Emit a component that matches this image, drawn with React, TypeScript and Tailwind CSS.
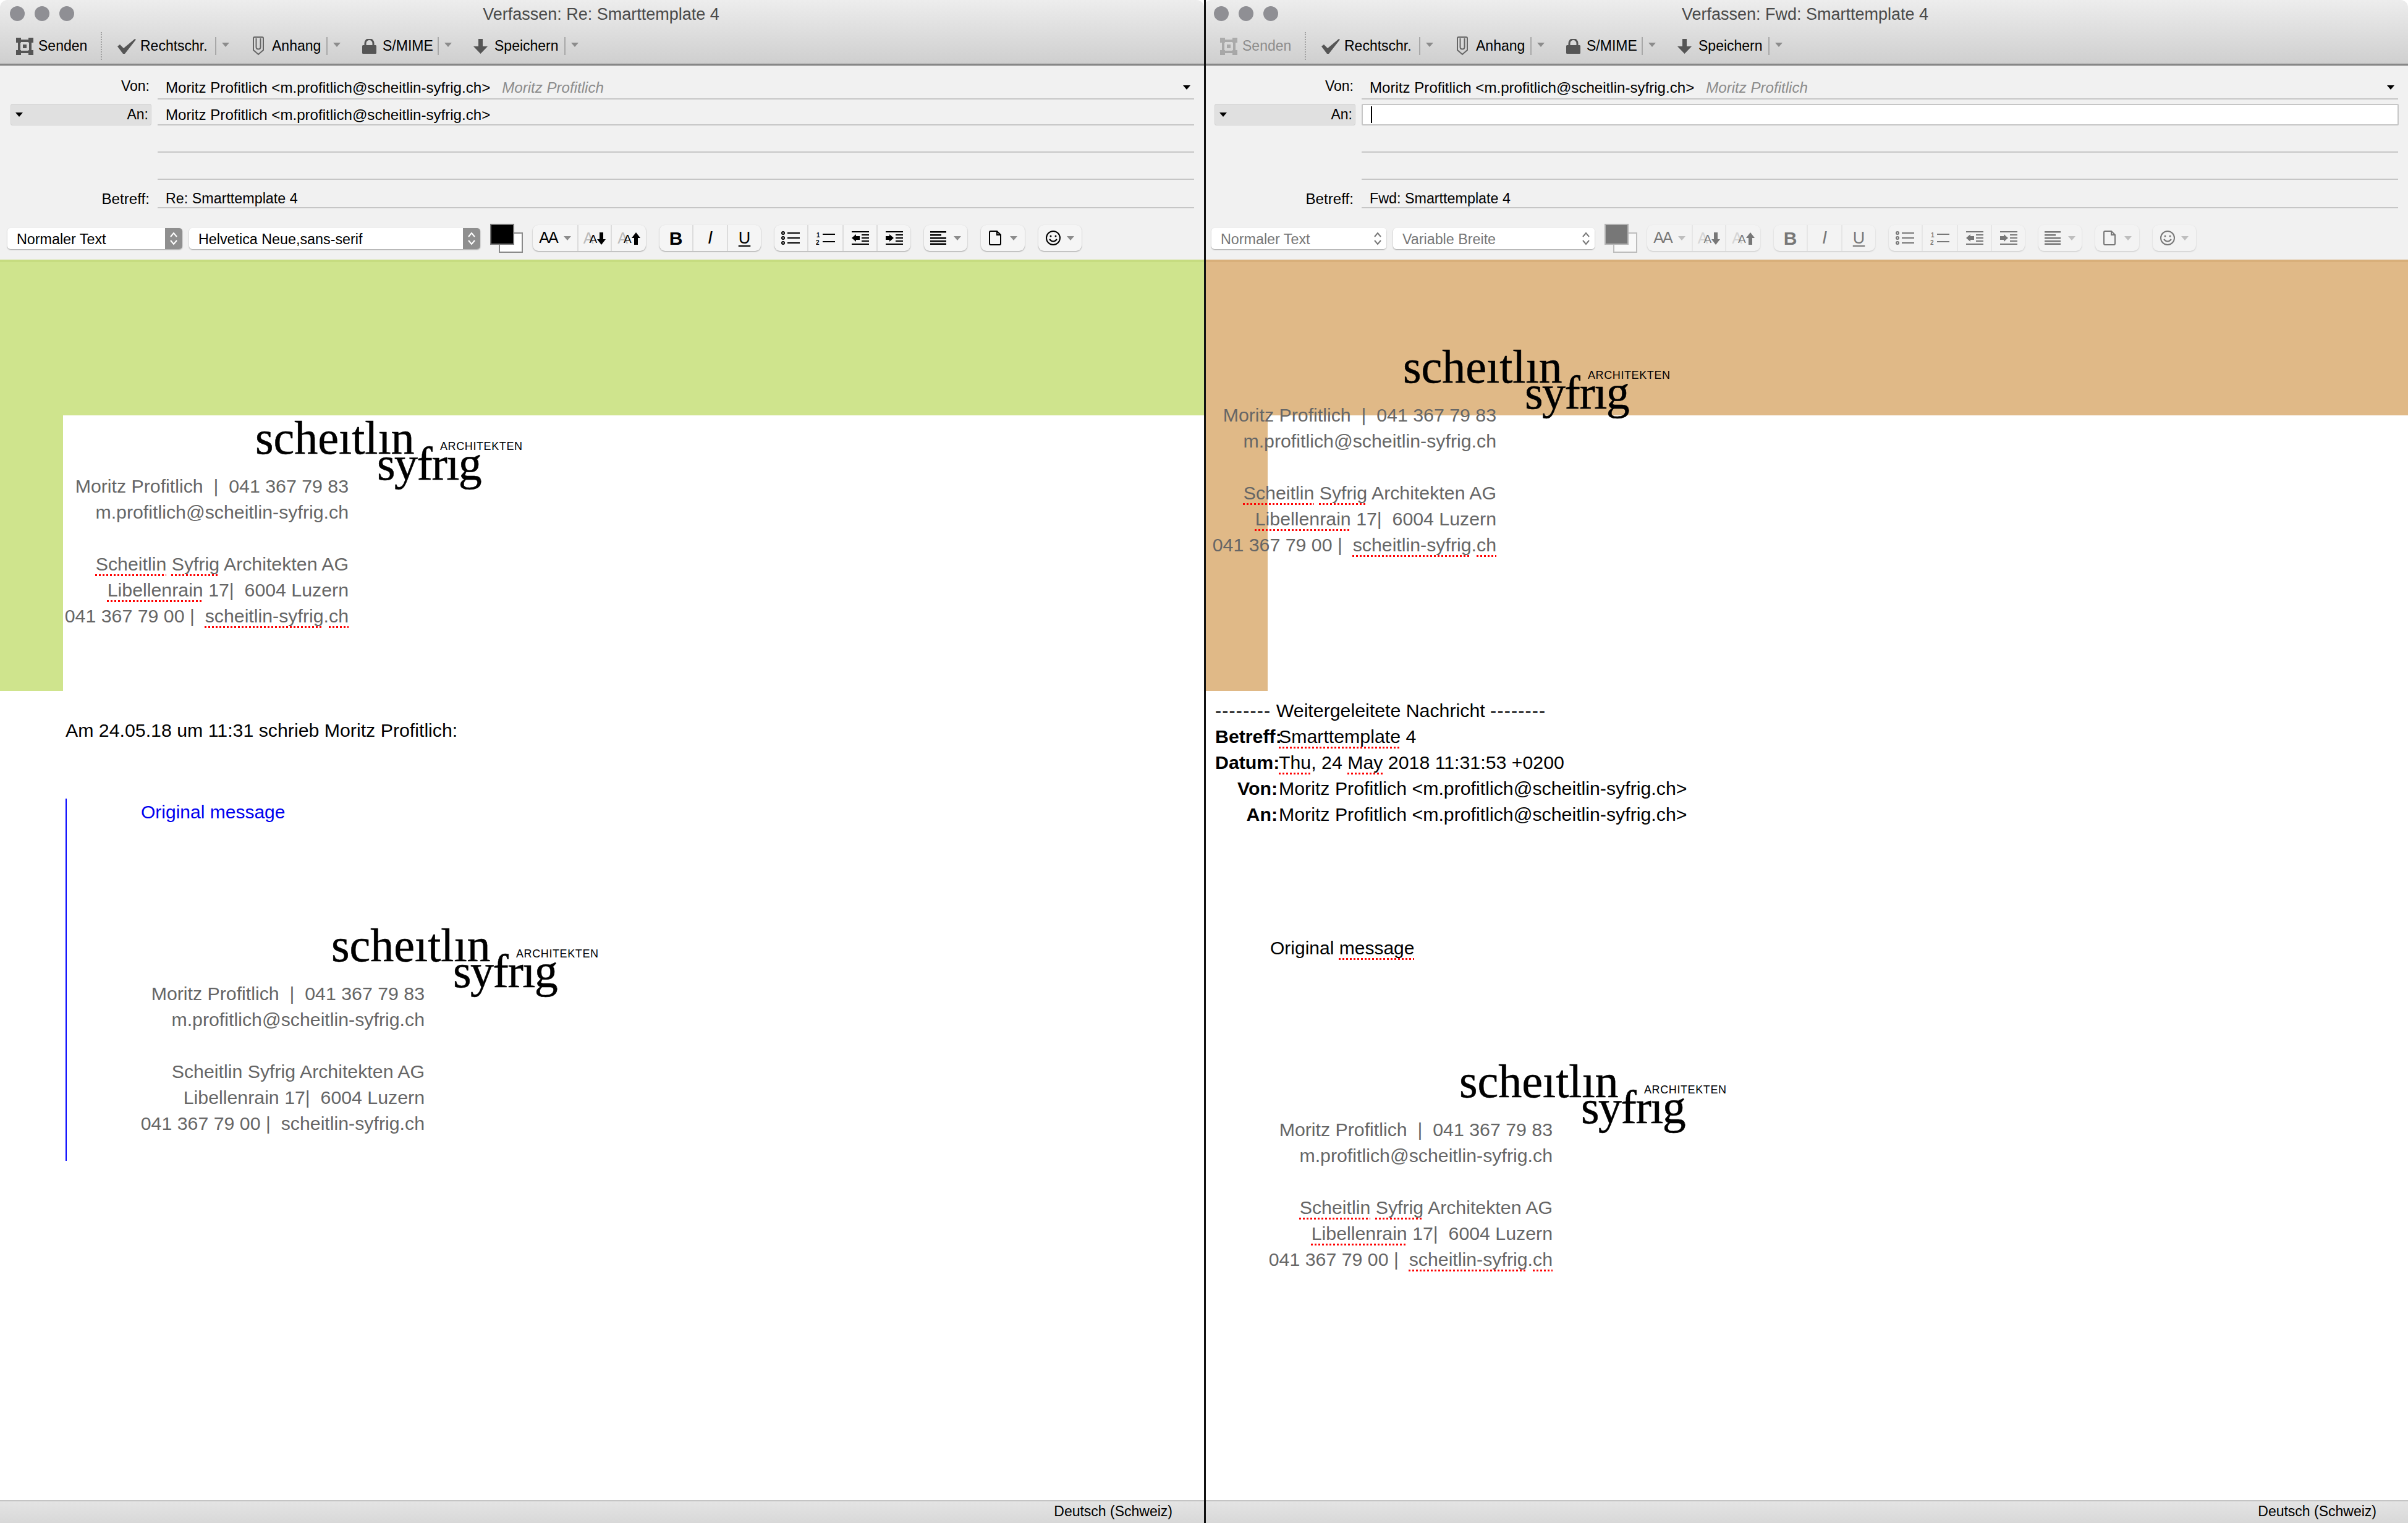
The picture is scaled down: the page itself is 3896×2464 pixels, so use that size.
import React from 'react';

const SANS = 'font-["Liberation_Sans",Arial,sans-serif]';
const SPELL =
  'underline decoration-dotted decoration-[#f00] decoration-[3px] underline-offset-[6px] [text-decoration-skip-ink:none]';

const Tri: React.FC<{ className?: string; fill?: string }> = ({ className = '', fill = '#8c8c8c' }) => (
  <svg viewBox="0 0 12 7" className={`w-[12px] h-[7px] shrink-0 ${className}`}>
    <polygon points="0,0 12,0 6,7" fill={fill} />
  </svg>
);

// toolbar icons
const SendIcon = () => (
  <svg viewBox="0 0 28 28" className="w-[28px] h-[28px]" fill="#555">
    <rect x="0" y="0" width="8" height="8" />
    <rect x="20" y="0" width="8" height="8" />
    <rect x="0" y="20" width="8" height="8" />
    <rect x="20" y="20" width="8" height="8" />
    <rect x="8" y="3" width="12" height="4" />
    <rect x="8" y="21" width="12" height="4" />
    <rect x="3" y="8" width="4" height="12" />
    <rect x="21" y="8" width="4" height="12" />
    <rect x="11" y="11" width="6" height="6" />
  </svg>
);
const CheckIcon = () => (
  <svg viewBox="0 0 30 24" className="w-[30px] h-[24px]" fill="#555">
    <polygon points="0,12 4,9 10,15 28,0 30,1 12,24 9,24" />
  </svg>
);
const ClipIcon = () => (
  <svg viewBox="0 0 18 31" className="w-[18px] h-[31px]" fill="none" stroke="#666" strokeWidth="2">
    <path d="M1 3 q0 -2 2 -2 h12 q2 0 2 2 v19 l-8 7 l-8 -7 z" />
    <path d="M5.500 3 v14 q0 3.500 3.500 3.500 t3.500 -3.500 v-14" />
  </svg>
);
const LockIcon = () => (
  <svg viewBox="0 0 23 24" className="w-[23px] h-[24px]">
    <path d="M5 11 v-4 a6.500 6.500 0 0 1 13 0 v4" fill="none" stroke="#555" strokeWidth="3" />
    <rect x="0" y="10" width="23" height="14" rx="1.500" fill="#555" />
  </svg>
);
const SaveIcon = () => (
  <svg viewBox="0 0 23 24" className="w-[23px] h-[24px]" fill="#555">
    <polygon points="8,0 15,0 15,12 23,12 11.500,24 0,12 8,12" />
  </svg>
);

const ToolBtn: React.FC<{
  icon: React.ReactNode;
  label: string;
  labelW: string;
  iconW: string;
  gap: string;
  ml: string;
}> = ({ icon, label, labelW, iconW, gap, ml }) => (
  <div className={`flex items-center ${ml}`}>
    <div className={`flex justify-center ${iconW}`}>{icon}</div>
    <span className={`${gap} ${labelW} whitespace-nowrap text-[23px] text-black`}>{label}</span>
    <div className="ml-[10px] w-[2px] h-[29px] bg-[#a8a8a8]" />
    <Tri className="ml-[9px] -mt-[4px]" />
  </div>
);

const Select: React.FC<{ label: string; width: string; disabled?: boolean }> = ({ label, width, disabled }) => (
  <div
    className={`flex items-stretch h-[34px] mt-[2px] rounded-[5px] bg-white shadow-[0_1px_2px_rgba(0,0,0,0.35)] overflow-hidden ${width}`}
  >
    <span
      className={`flex-1 pl-[15px] text-[23.300px] leading-[36px] whitespace-nowrap ${disabled ? 'text-[#777]' : 'text-black'}`}
    >
      {label}
    </span>
    <div className={`w-[28px] flex items-center justify-center ${disabled ? 'bg-white' : 'bg-[#8f8f8f]'}`}>
      <svg viewBox="0 0 14 24" className="w-[14px] h-[24px]" fill="none" stroke={disabled ? '#777' : '#fff'} strokeWidth="2">
        <path d="M2 9 L7 3 L12 9" />
        <path d="M2 15 L7 21 L12 15" />
      </svg>
    </div>
  </div>
);

const Group: React.FC<{ children: React.ReactNode }> = ({ children }) => (
  <div className="flex h-[42px] rounded-[9px] bg-[#f5f5f5] shadow-[0_1px_2px_rgba(0,0,0,0.35)] overflow-hidden">
    {children}
  </div>
);
const Cell: React.FC<{ w: string; last?: boolean; children: React.ReactNode }> = ({ w, last, children }) => (
  <div className={`flex items-center justify-center text-black ${w} ${last ? '' : 'border-r-2 border-[#dcdcdc]'}`}>
    {children}
  </div>
);

const MiniA: React.FC<{ up?: boolean }> = ({ up }) => (
  <div className="flex items-end">
    <span className="text-[25px] leading-[28px] text-[#bbb]">A</span>
    <span className="-ml-[7px] text-[19px] leading-[25px]">A</span>
    <svg viewBox="0 0 14 20" className="w-[14px] h-[20px] mb-[3px]" fill="currentColor">
      {up ? <polygon points="7,0 14,9 10,9 10,20 4,20 4,9 0,9" /> : <polygon points="4,0 10,0 10,11 14,11 7,20 0,11 4,11" />}
    </svg>
  </div>
);

const BulletsIcon = () => (
  <svg viewBox="0 0 32 24" className="w-[32px] h-[24px]" fill="none" stroke="currentColor" strokeWidth="2">
    <circle cx="3" cy="4" r="2" />
    <circle cx="3" cy="12" r="2" />
    <circle cx="3" cy="20" r="2" />
    <path d="M10 4 H30 M10 12 H30 M10 20 H30" />
  </svg>
);
const NumbersIcon = () => (
  <svg viewBox="0 0 32 24" className="w-[32px] h-[24px]" stroke="currentColor">
    <text x="1" y="11" fontSize="10" fontWeight="700" fill="currentColor" stroke="none">1</text>
    <text x="0" y="23" fontSize="10" fontWeight="700" fill="currentColor" stroke="none">2</text>
    <path d="M11 6 H31 M11 18 H31" strokeWidth="2" fill="none" />
  </svg>
);
const IndentIcon: React.FC<{ out?: boolean }> = ({ out }) => (
  <svg viewBox="0 0 28 22" className="w-[28px] h-[22px]" fill="currentColor">
    <rect x="0" y="0" width="28" height="2" />
    <rect x="0" y="20" width="28" height="2" />
    <rect x="16" y="5" width="12" height="2" />
    <rect x="16" y="10" width="12" height="2" />
    <rect x="16" y="15" width="12" height="2" />
    {out ? <polygon points="0,11 7,5 7,8 13,8 13,14 7,14 7,17" /> : <polygon points="13,11 6,5 6,8 0,8 0,14 6,14 6,17" />}
  </svg>
);
const AlignIcon = () => (
  <svg viewBox="0 0 26 22" className="w-[26px] h-[22px]" fill="currentColor">
    <rect x="0" y="0" width="26" height="2.500" />
    <rect x="0" y="5" width="18" height="2.500" />
    <rect x="0" y="10" width="26" height="2.500" />
    <rect x="0" y="15" width="26" height="2.500" />
    <rect x="0" y="19.500" width="26" height="2.500" />
  </svg>
);
const PageIcon = () => (
  <svg viewBox="0 0 20 24" className="w-[20px] h-[24px]" fill="none" stroke="currentColor" strokeWidth="2">
    <path d="M3 1 H13 L19 7 V21 q0 2 -2 2 H3 q-2 0 -2 -2 V3 q0 -2 2 -2 Z M13 1 V7 H19" />
  </svg>
);
const SmileIcon = () => (
  <svg viewBox="0 0 24 24" className="w-[24px] h-[24px]" fill="none" stroke="currentColor" strokeWidth="2">
    <circle cx="12" cy="12" r="11" />
    <circle cx="8" cy="9" r="1.500" fill="currentColor" stroke="none" />
    <circle cx="16" cy="9" r="1.500" fill="currentColor" stroke="none" />
    <path d="M6 14 q6 7 12 0" />
  </svg>
);

const FormatBar: React.FC<{ disabled?: boolean; fontLabel: string; fontW: string }> = ({ disabled, fontLabel, fontW }) => {
  const dim = disabled ? 'opacity-50' : '';
  return (
    <div className="flex items-center h-[70px] pl-[12px]">
      <Select label="Normaler Text" width="w-[283px]" disabled={disabled} />
      <Select label={fontLabel} width={`ml-[11px] ${fontW}`} disabled={disabled} />
      <div className={`relative ml-[16px] w-[53px] h-[47px] shrink-0 ${dim}`}>
        <div className="absolute left-[14px] top-[14px] w-[39px] h-[33px] bg-white border-2 border-[#8a8a8a]" />
        <div className="absolute left-0 top-0 w-[39px] h-[34px] bg-black border-2 border-[#777]" />
      </div>
      <div className={`flex gap-[22px] ml-[16px] ${SANS}`}>
        <div className={dim}>
          <Group>
            <Cell w="w-[74px]">
              <span className="text-[25px] tracking-[-2px]">AA</span>
              <Tri className="ml-[10px]" />
            </Cell>
            <Cell w="w-[54px]"><MiniA /></Cell>
            <Cell w="w-[55px]" last><MiniA up /></Cell>
          </Group>
        </div>
        <div className={dim}>
          <Group>
            <Cell w="w-[55px]"><span className="text-[30px] font-bold">B</span></Cell>
            <Cell w="w-[56px]"><span className="text-[29px] italic">I</span></Cell>
            <Cell w="w-[53px]" last>
              <span className="text-[27px] underline underline-offset-[3px]">U</span>
            </Cell>
          </Group>
        </div>
        <div className={dim}>
          <Group>
            <Cell w="w-[55px]"><BulletsIcon /></Cell>
            <Cell w="w-[57px]"><NumbersIcon /></Cell>
            <Cell w="w-[55px]"><IndentIcon out /></Cell>
            <Cell w="w-[53px]" last><IndentIcon /></Cell>
          </Group>
        </div>
        <div className={dim}>
          <Group>
            <Cell w="w-[70px]" last><AlignIcon /><Tri className="ml-[12px]" /></Cell>
          </Group>
        </div>
        <div className={dim}>
          <Group>
            <Cell w="w-[71px]" last><PageIcon /><Tri className="ml-[14px]" /></Cell>
          </Group>
        </div>
        <div className={dim}>
          <Group>
            <Cell w="w-[70px]" last><SmileIcon /><Tri className="ml-[10px]" /></Cell>
          </Group>
        </div>
      </div>
    </div>
  );
};

const Field: React.FC<{ className?: string; children?: React.ReactNode }> = ({ className = '', children }) => (
  <div className={`flex items-center w-[1677px] ml-[255px] border-b-2 border-[#c6c6c6] pl-[13px] text-[24.100px] whitespace-nowrap ${className}`}>
    {children}
  </div>
);

const Header: React.FC<{ title: string; subject: string; forwarded?: boolean }> = ({ title, subject, forwarded }) => (
  <>
    <div className="h-[103px] rounded-t-[12px] bg-gradient-to-b from-[#ededed] to-[#cfcfcf]">
      <div className="relative flex items-center justify-center h-[46px]">
        <span className="-ml-[3px] text-[27px] text-[#4a4a4a] whitespace-nowrap">{title}</span>
        <div className="absolute left-[16px] top-[10px] flex gap-[16px]">
          <div className="w-[24px] h-[24px] rounded-full bg-[#8f8f94]" />
          <div className="w-[24px] h-[24px] rounded-full bg-[#8f8f94]" />
          <div className="w-[24px] h-[24px] rounded-full bg-[#8f8f94]" />
        </div>
      </div>
      <div className="flex items-center h-[57px] pl-[26px]">
        <div className={`flex items-center ${forwarded ? 'opacity-35' : ''}`}>
          <SendIcon />
          <span className="ml-[8px] w-[77px] text-[23px] whitespace-nowrap text-black">Senden</span>
        </div>
        <div className="ml-[24px] h-[45px] border-l-2 border-dotted border-[#a0a0a0]" />
        <ToolBtn ml="ml-[25px]" iconW="w-[30px]" gap="ml-[7px]" labelW="w-[111px]" icon={<CheckIcon />} label="Rechtschr." />
        <ToolBtn ml="ml-[38px]" iconW="w-[18px]" gap="ml-[13px]" labelW="w-[78px]" icon={<ClipIcon />} label="Anhang" />
        <ToolBtn ml="ml-[35px]" iconW="w-[23px]" gap="ml-[10px]" labelW="w-[79px]" icon={<LockIcon />} label="S/MIME" />
        <ToolBtn ml="ml-[35px]" iconW="w-[23px]" gap="ml-[11px]" labelW="w-[103px]" icon={<SaveIcon />} label="Speichern" />
      </div>
    </div>
    <div className="h-[4px] bg-gradient-to-b from-[#6e6e6e] to-[#bdbdbd]" />
    <div className="relative bg-[#f1f1f1] h-[313px]">
      <div className="relative flex items-end h-[54px]">
        <span className="absolute right-[1706px] bottom-[4px] text-[23px] leading-[36px] text-black">Von:</span>
        <Field className="relative h-[36px]">
          <span>Moritz Profitlich &lt;m.profitlich@scheitlin-syfrig.ch&gt;</span>
          <span className="ml-[19px] italic text-[#8c8c8c]">Moritz Profitlich</span>
          <Tri className="absolute right-[6px] top-[13px]" fill="#000" />
        </Field>
      </div>
      <div className="relative h-[42px] pt-[7px]">
        <div className="absolute left-[17px] top-[7px] flex items-center justify-between w-[228px] h-[35px] pl-[7px] pr-[4px] rounded-[3px] bg-[#e0e0e0] border border-[#d2d2d2]">
          <Tri fill="#000" />
          <span className="text-[23px] text-black">An:</span>
        </div>
        {forwarded ? (
          <div className="flex items-center w-[1678px] ml-[255px] h-[35px] pl-[13px] bg-white border-2 border-[#c6c6c6] rounded-[2px]">
            <div className="w-[2px] h-[27px] bg-black" />
          </div>
        ) : (
          <Field className="h-[35px] pt-[4px]">Moritz Profitlich &lt;m.profitlich@scheitlin-syfrig.ch&gt;</Field>
        )}
      </div>
      <Field className="h-[44px]" />
      <Field className="h-[44px]" />
      <div className="relative h-[46px]">
        <span className="absolute right-[1706px] top-[13px] text-[24.200px] leading-[36px] text-black">Betreff:</span>
        <Field className="h-[46px] pt-[17px]">
          <span className="text-[23.300px]">{subject}</span>
        </Field>
      </div>
      <div className="absolute left-0 right-0 top-[243px]">
        <FormatBar
          disabled={forwarded}
          fontLabel={forwarded ? 'Variable Breite' : 'Helvetica Neue,sans-serif'}
          fontW={forwarded ? 'w-[326px]' : 'w-[471px]'}
        />
      </div>
    </div>
  </>
);

const Logo = () => (
  <div className="relative ml-[311px] h-[88px] w-[431px] text-left text-black font-['Liberation_Serif',serif] whitespace-nowrap">
    <span className="absolute left-0 -top-[20px] text-[76px] leading-[100px] [-webkit-text-stroke:0.5px_black]">scheıtlın</span>
    <span className="absolute left-[197px] top-[22px] text-[76px] leading-[100px] tracking-[-1.500px] [-webkit-text-stroke:0.5px_black]">syfrıg</span>
    <span className={`absolute left-[299px] top-[32px] text-[18px] leading-[24px] tracking-[0.600px] ${SANS}`}>ARCHITEKTEN</span>
  </div>
);

const Signature: React.FC<{ spell?: boolean; className?: string }> = ({ spell, className = '' }) => {
  const s = spell ? SPELL : '';
  return (
    <div className={`w-[462px] text-right text-[30.300px] leading-[42px] text-[#666] whitespace-nowrap ${className}`}>
      <Logo />
      <p>Moritz Profitlich &nbsp;|&nbsp; 041 367 79 83</p>
      <p>m.profitlich@scheitlin-syfrig.ch</p>
      <p>&nbsp;</p>
      <p><span className={s}>Scheitlin</span> <span className={s}>Syfrig</span> Architekten AG</p>
      <p><span className={s}>Libellenrain</span> 17|&nbsp; 6004 Luzern</p>
      <p>041 367 79 00 |&nbsp; <span className={s}>scheitlin-syfrig</span>.<span className={s}>ch</span></p>
    </div>
  );
};

const StatusBar = () => (
  <div className="flex items-center justify-end h-[37px] pb-[3px] pr-[51px] border-t-2 border-[#c4c4c4] bg-gradient-to-b from-[#e4e4e4] to-[#d8d8d8]">
    <span className="text-[23px] text-black whitespace-nowrap">Deutsch (Schweiz)</span>
  </div>
);

const ForwardRow: React.FC<{ label: string; children: React.ReactNode }> = ({ label, children }) => (
  <div className="flex">
    <b className="w-[101px] text-right">{label}</b>
    <span className="ml-[2px]">{children}</span>
  </div>
);

export default function App() {
  return (
    <div className={`flex w-[3896px] h-[2464px] overflow-hidden bg-white ${SANS}`}>
      {/* reply window */}
      <div className="flex flex-col w-[1948px]">
        <Header title="Verfassen: Re: Smarttemplate 4" subject="Re: Smarttemplate 4" />
        <div className="flex-1 overflow-hidden bg-white text-[30.300px] leading-[42px] text-black">
          <div className="pt-[248px] pl-[102px] bg-[#cfe48d] border-t-4 border-[#c6dc80]">
            <div className="h-[446px] pt-[6px] bg-white">
              <Signature spell />
            </div>
          </div>
          <p className="mt-[43px] ml-[106px]">Am 24.05.18 um 11:31 schrieb Moritz Profitlich:</p>
          <div className="mt-[89px] ml-[106px] pl-[120px] pb-[39px] border-l-2 border-[#0000ff]">
            <p className="pt-[1px] -mb-[1px] text-[30px] text-[#0000ee]">Original message</p>
            <Signature className="mt-[165px] -ml-[3px]" />
          </div>
        </div>
        <StatusBar />
      </div>

      {/* forward window */}
      <div className="relative flex flex-col w-[1948px]">
        <Header title="Verfassen: Fwd: Smarttemplate 4" subject="Fwd: Smarttemplate 4" forwarded />
        <div className="flex-1 overflow-hidden bg-white text-[30.300px] leading-[42px] text-black">
          <div className="pt-[248px] pl-[103px] bg-[#e0b987] border-t-4 border-[#d8af7a]">
            <div className="flex flex-col h-[446px] bg-white">
              <Signature spell className="-mt-[109px] -ml-[92px]" />
            </div>
          </div>
          <div className="mt-[11px]">
            <p className="pl-[18px]">
              <span className="tracking-[1.200px]">--------</span> Weitergeleitete Nachricht{' '}
              <span className="tracking-[1.200px]">--------</span>
            </p>
            <div className="pl-[18px]">
              <ForwardRow label="Betreff:"><span className={SPELL}>Smarttemplate</span> 4</ForwardRow>
              <ForwardRow label="Datum:">
                <span className={SPELL}>Thu</span>, 24 <span className={SPELL}>May</span> 2018 11:31:53 +0200
              </ForwardRow>
              <ForwardRow label="Von:">Moritz Profitlich &lt;m.profitlich@scheitlin-syfrig.ch&gt;</ForwardRow>
              <ForwardRow label="An:">Moritz Profitlich &lt;m.profitlich@scheitlin-syfrig.ch&gt;</ForwardRow>
            </div>
          </div>
          <p className="mt-[174px] ml-[107px] text-[30px]">
            Original <span className={SPELL}>message</span>
          </p>
          <Signature spell className="mt-[164px] ml-[102px]" />
        </div>
        <StatusBar />
        <div className="absolute left-0 top-0 bottom-0 w-[3px] bg-[#111]" />
      </div>
    </div>
  );
}
